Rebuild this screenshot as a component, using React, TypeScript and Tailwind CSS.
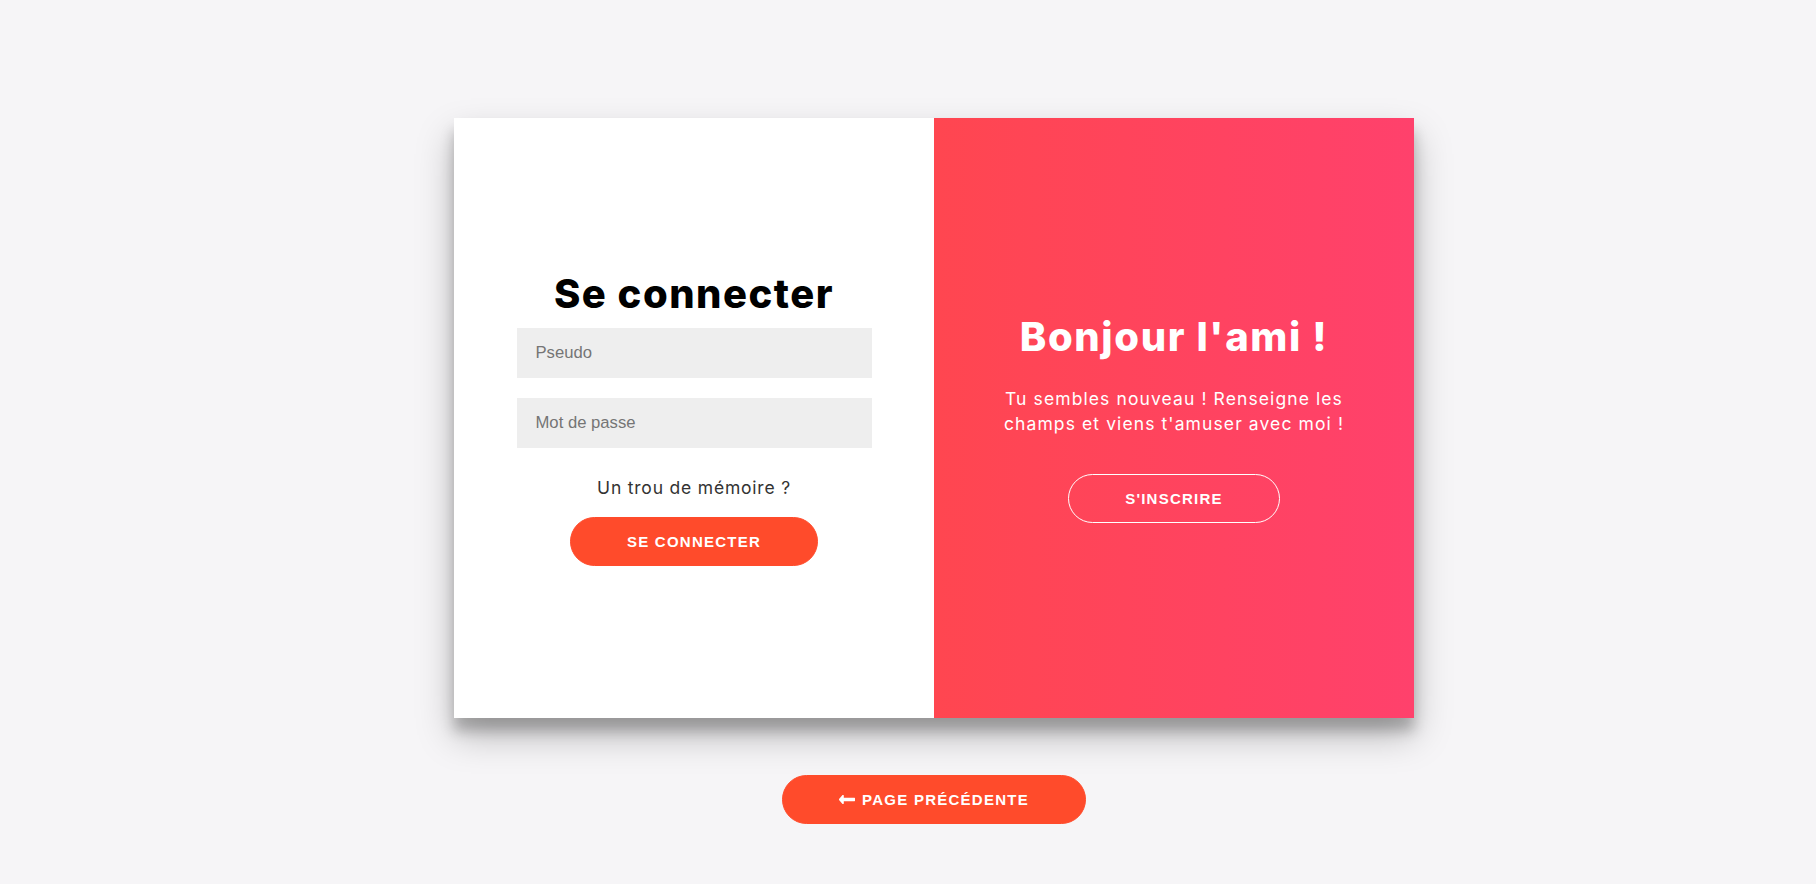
import React from "react";

const mont = "font-['Inter','Noto_Sans',sans-serif]";
const arial = "font-['Liberation_Sans',Arial,sans-serif]";

function ArrowLeft() {
  return (
    <svg width="16" height="9" viewBox="0 150 448 212" preserveAspectRatio="none" fill="currentColor" aria-hidden="true">
      <path d="M134.059 296H436c6.627 0 12-5.373 12-12v-56c0-6.627-5.373-12-12-12H134.059v-46.059c0-21.382-25.851-32.090-40.971-16.971L7.029 239.029c-9.373 9.373-9.373 24.569 0 33.941l86.059 86.059c15.119 15.119 40.971 4.411 40.971-16.971V296z" />
    </svg>
  );
}

export default function App() {
  return (
    <div className={`min-h-screen bg-[#f6f5f7] flex flex-col items-center pt-[118px] pl-[52px] ${mont}`}>
      <div className="w-[960px] h-[600px] flex shadow-[0_17.5px_35px_rgba(0,0,0,0.25),0_12.5px_12.5px_rgba(0,0,0,0.22)]">
        <div className="w-1/2 bg-white flex flex-col items-center justify-center px-[62.5px] text-center">
          <h1 className="text-[40px] font-extrabold leading-[48px] text-black tracking-[1.5px]">Se connecter</h1>
          <input
            type="text"
            placeholder="Pseudo"
            className={`w-full h-[50px] bg-[#eee] my-[10px] px-[19px] text-[16.67px] outline-none placeholder:text-[#757575] ${arial}`}
          />
          <input
            type="password"
            placeholder="Mot de passe"
            className={`w-full h-[50px] bg-[#eee] my-[10px] px-[19px] text-[16.67px] outline-none placeholder:text-[#757575] ${arial}`}
          />
          <a href="#" className="block text-[17.5px] leading-[21px] text-[#333] my-[18.75px] font-normal tracking-[0.8px]">
            Un trou de mémoire ?
          </a>
          <button
            className={`rounded-[25px] border border-[#FF4B2B] bg-[#FF4B2B] text-white text-[15px] font-bold px-[56.25px] py-[15px] leading-[17px] tracking-[1.25px] uppercase ${arial}`}
          >
            Se connecter
          </button>
        </div>
        <div className="w-1/2 bg-[linear-gradient(to_right,#ff4650,#ff416c)] flex flex-col items-center justify-center px-[50px] text-center text-white">
          <h1 className="text-[40px] font-extrabold leading-[48px] tracking-[1.6px]">Bonjour l'ami !</h1>
          <p className="text-[17.5px] leading-[25px] tracking-[1.1px] mt-[25px] mb-[37.5px] font-normal">
            Tu sembles nouveau ! Renseigne les
            <br />
            champs et viens t'amuser avec moi !
          </p>
          <button
            className={`rounded-[25px] border border-white bg-transparent text-white text-[15px] font-bold px-[56.25px] py-[15px] leading-[17px] tracking-[1.25px] uppercase ${arial}`}
          >
            S'inscrire
          </button>
        </div>
      </div>
      <button
        className={`mt-[57px] flex items-center gap-[7px] rounded-[25px] border border-[#FF4B2B] bg-[#FF4B2B] text-white text-[15px] font-bold px-[56.25px] py-[15px] leading-[17px] tracking-[1.25px] uppercase ${arial}`}
      >
        <ArrowLeft />
        <span>Page précédente</span>
      </button>
    </div>
  );
}
